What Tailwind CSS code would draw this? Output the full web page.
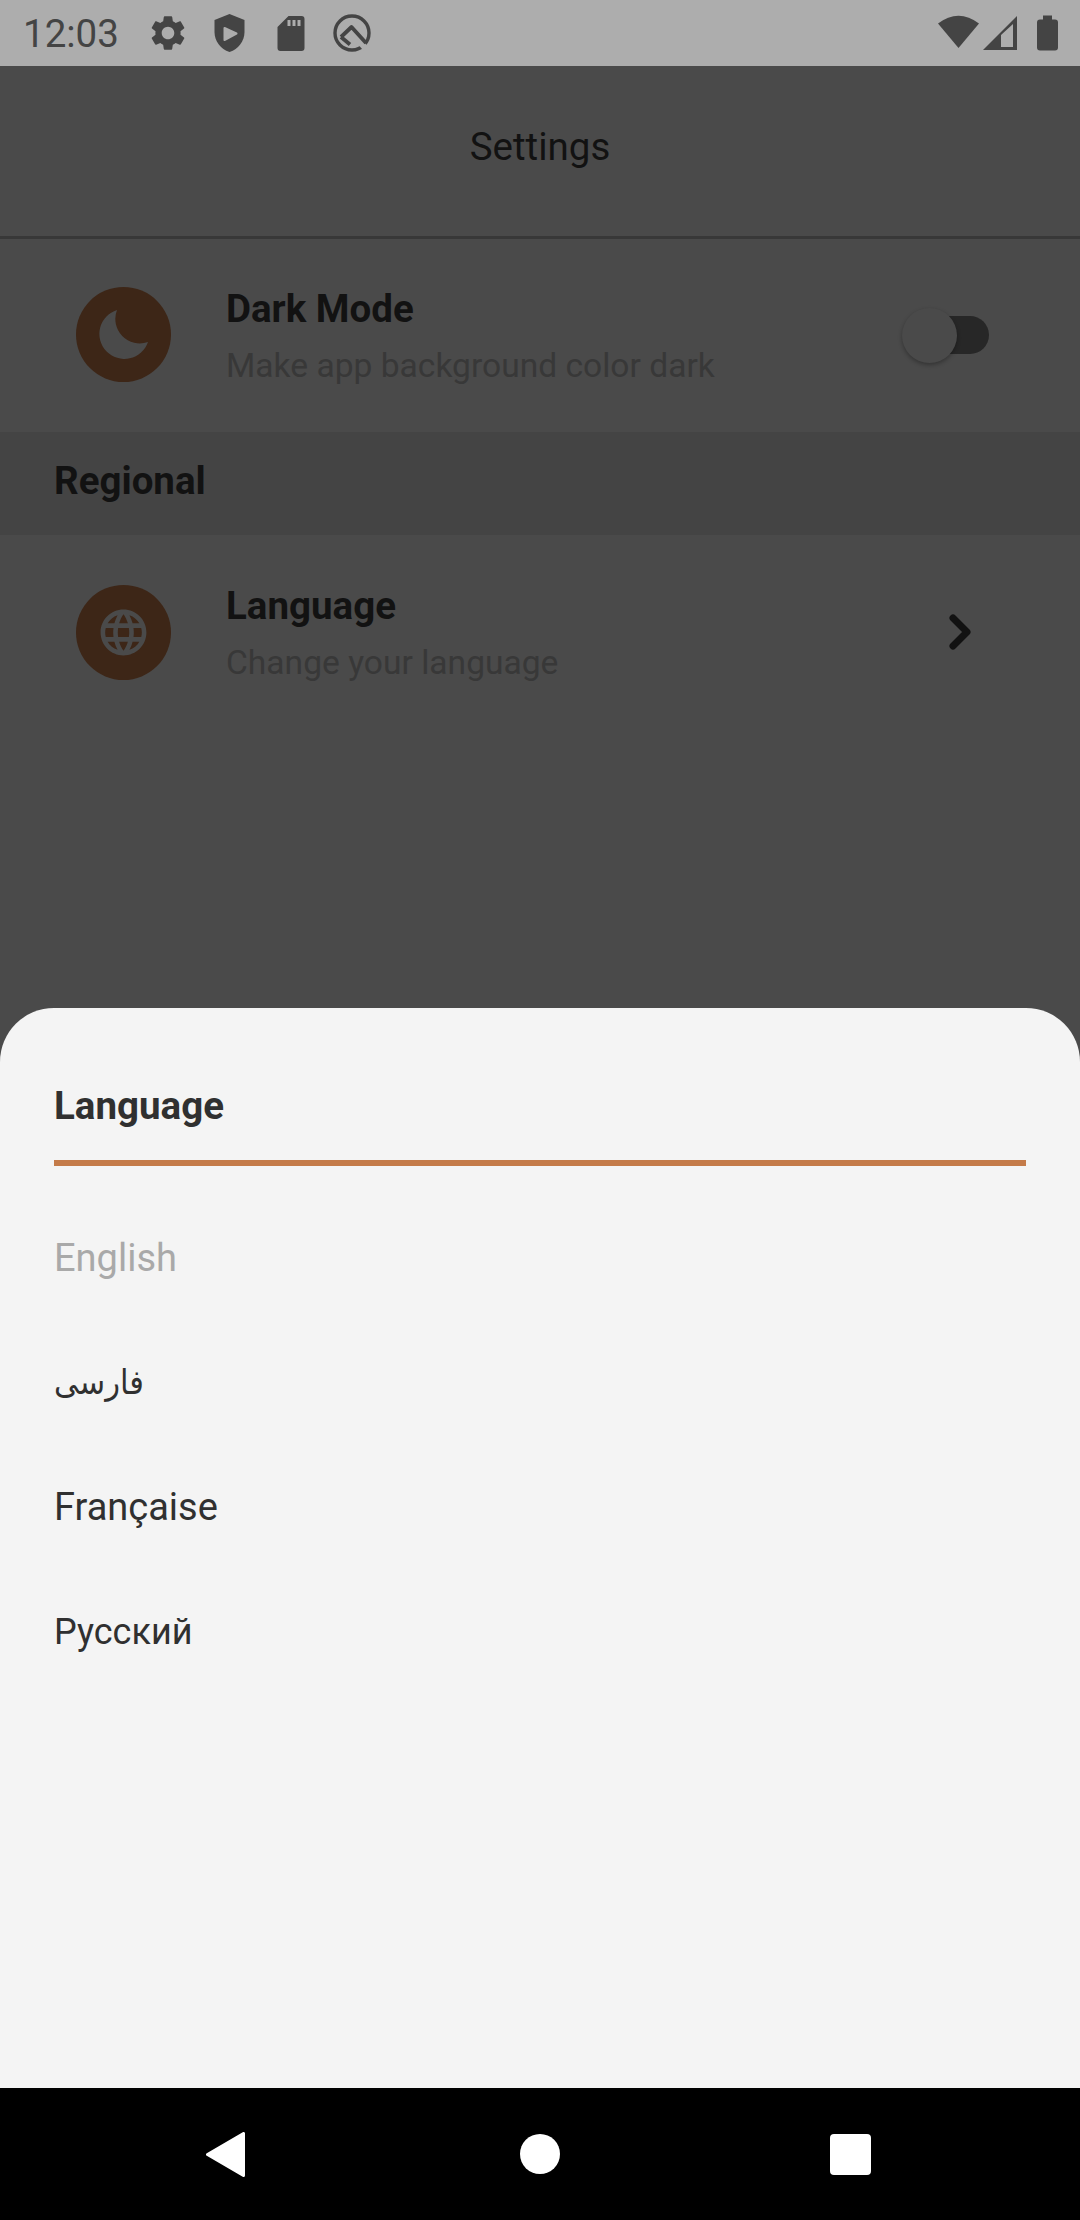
<!doctype html>
<html>
<head>
<meta charset="utf-8">
<script src="https://cdn.jsdelivr.net/npm/@tailwindcss/browser@4"></script>
</head>
<body class="m-0">
<div class="w-[1080px] h-[2220px] flex flex-col overflow-hidden bg-[#4a4a4a] [font-family:Roboto,'Noto_Sans','DejaVu_Sans',sans-serif]">
  <!-- status bar -->
  <div class="h-[66px] shrink-0 bg-[#adadad] flex items-center pl-[23px] pr-[22px] text-[#444444]">
    <span class="text-[38.5px] leading-[66px] w-[94px] mt-[2px]">12:03</span>
    <div class="flex items-center ml-[30px]">
      <svg class="w-[42px] h-[42px]" viewBox="0 0 24 24" fill="#444444"><path d="M19.14 12.94c.04-.3.06-.61.06-.94 0-.32-.02-.64-.07-.94l2.03-1.58c.18-.14.23-.41.12-.61l-1.92-3.32c-.12-.22-.37-.29-.59-.22l-2.39.96c-.5-.38-1.03-.7-1.62-.94l-.36-2.54c-.04-.24-.24-.41-.48-.41h-3.84c-.24 0-.43.17-.47.41l-.36 2.54c-.59.24-1.13.57-1.62.94l-2.39-.96c-.22-.08-.47 0-.59.22L2.74 8.87c-.12.21-.08.47.12.61l2.03 1.58c-.05.3-.09.63-.09.94s.02.64.07.94l-2.03 1.58c-.18.14-.23.41-.12.61l1.92 3.32c.12.22.37.29.59.22l2.39-.96c.5.38 1.03.7 1.62.94l.36 2.54c.05.24.24.41.48.41h3.84c.24 0 .44-.17.47-.41l.36-2.54c.59-.24 1.13-.56 1.62-.94l2.39.96c.22.08.47 0 .59-.22l1.92-3.32c.12-.22.07-.47-.12-.61l-2.01-1.58zM12 15.6c-1.98 0-3.6-1.62-3.6-3.6s1.62-3.6 3.6-3.6 3.6 1.62 3.6 3.6-1.62 3.6-3.6 3.6z"/></svg>
      <svg class="w-[31px] h-[38px] ml-[25px]" viewBox="0 0 30 38"><path fill="#444444" d="M15 0 L30 6 V18 C30 27 24 35 15 38 C6 35 0 27 0 18 V6 Z"/><path fill="#adadad" stroke="#adadad" stroke-width="2" stroke-linejoin="round" d="M10 14 L22 19.5 L10 26 Z"/></svg>
      <svg class="w-[28px] h-[35px] ml-[32px]" viewBox="0 0 27 35"><path fill="#444444" fill-rule="evenodd" d="M11 0 H24 A3 3 0 0 1 27 3 V32 A3 3 0 0 1 24 35 H3 A3 3 0 0 1 0 32 V11 Z M10 4 V10 H13 V4 Z M15 4 V10 H18 V4 Z M20 4 V10 H23 V4 Z"/></svg>
      <svg class="w-[38px] h-[38px] ml-[28px]" viewBox="0 0 38 38" fill="none" stroke="#444444" stroke-linejoin="round"><circle cx="19" cy="19" r="17" stroke-width="3.4"/><path d="M26 27 L34 36" stroke="#adadad" stroke-width="6"/><path d="M8 23 L18.5 13 L33 29" stroke-width="3.8"/><path d="M8 23 L17 30.5" stroke-width="3.8"/></svg>
    </div>
    <div class="ml-auto flex items-center">
      <svg class="w-[41px] h-[36px] mt-[-2px]" viewBox="0 0 41 36"><path fill="#444444" d="M20.5 34 L0 9.5 Q20.5 -6 41 9.5 Z"/></svg>
      <svg class="w-[34px] h-[34px] ml-[4px]" viewBox="0 0 34 34"><path fill="#444444" fill-rule="evenodd" d="M0 34 L34 0 V34 Z M18 19 V31 H30 V8 Z"/></svg>
      <svg class="w-[21px] h-[36px] ml-[20px]" viewBox="0 0 21 35"><path fill="#444444" d="M6 0 H15 V4 H18 A3 3 0 0 1 21 7 V32 A3 3 0 0 1 18 35 H3 A3 3 0 0 1 0 32 V7 A3 3 0 0 1 3 4 H6 Z"/></svg>
    </div>
  </div>

  <!-- app bar -->
  <div class="h-[173px] shrink-0 border-b-[3px] border-[#383838] flex items-center justify-center pb-[9px]">
    <span class="text-[38.5px] text-[#121212]">Settings</span>
  </div>

  <!-- dark mode row -->
  <div class="h-[193px] shrink-0 flex items-center pl-[76px]">
    <div class="w-[95px] h-[95px] mb-[3px] rounded-full bg-[#3d2617] flex items-center justify-center">
      <svg class="w-[49px] h-[49px]" viewBox="0 0 49 49"><path fill="#4a4a4a" d="M18 0 A25 25 0 1 0 49 32 A24.5 24.5 0 0 1 18 0 Z"/></svg>
    </div>
    <div class="ml-[55px] flex flex-col mt-[1px]">
      <span class="text-[38.5px] leading-[44px] font-bold text-[#121212]">Dark Mode</span>
      <span class="text-[33.6px] leading-[40px] mt-[15px] text-[#383838]">Make app background color dark</span>
    </div>
    <div class="relative ml-auto mr-[91px] w-[74px] h-[38px] mb-[1px] rounded-full bg-[#272727]">
      <div class="absolute left-[-13px] top-[-8px] w-[55px] h-[55px] rounded-full bg-[#4a4a4a] shadow-[0_2px_4px_rgba(0,0,0,0.3)]"></div>
    </div>
  </div>

  <!-- section header -->
  <div class="h-[103px] shrink-0 bg-[#444444] flex items-center pl-[54px] pb-[5px]">
    <span class="text-[38.5px] font-bold text-[#121212]">Regional</span>
  </div>

  <!-- language row -->
  <div class="h-[194px] shrink-0 flex items-center pl-[76px]">
    <div class="w-[95px] h-[95px] rounded-full bg-[#3d2617] flex items-center justify-center">
      <svg class="w-[55px] h-[55px]" viewBox="0 0 24 24" fill="#4a4a4a"><path d="M11.99 2C6.47 2 2 6.48 2 12s4.47 10 9.99 10C17.52 22 22 17.52 22 12S17.52 2 11.99 2zm6.93 6h-2.95c-.32-1.25-.78-2.45-1.38-3.56 1.84.63 3.37 1.91 4.33 3.56zM12 4.04c.83 1.2 1.48 2.53 1.91 3.96h-3.82c.43-1.43 1.08-2.76 1.91-3.96zM4.26 14C4.1 13.36 4 12.69 4 12s.1-1.36.26-2h3.38c-.08.66-.14 1.32-.14 2 0 .68.06 1.34.14 2H4.26zm.82 2h2.95c.32 1.25.78 2.45 1.38 3.56-1.84-.63-3.37-1.9-4.33-3.56zm2.95-8H5.08c.96-1.66 2.49-2.93 4.33-3.56C8.81 5.55 8.35 6.75 8.03 8zM12 19.96c-.83-1.2-1.48-2.53-1.91-3.96h3.82c-.43 1.43-1.08 2.76-1.91 3.96zM14.34 14H9.66c-.09-.66-.16-1.32-.16-2 0-.68.07-1.35.16-2h4.68c.09.65.16 1.32.16 2 0 .68-.07 1.34-.16 2zm.25 5.56c.6-1.11 1.06-2.31 1.38-3.56h2.95c-.96 1.65-2.49 2.93-4.33 3.56zM16.36 14c.08-.66.14-1.32.14-2 0-.68-.06-1.34-.14-2h3.38c.16.64.26 1.31.26 2s-.1 1.36-.26 2h-3.38z"/></svg>
    </div>
    <div class="ml-[55px] flex flex-col mt-[2px]">
      <span class="text-[38.5px] leading-[44px] font-bold text-[#121212]">Language</span>
      <span class="text-[33.6px] leading-[40px] mt-[15px] text-[#383838]">Change your language</span>
    </div>
    <svg class="ml-auto mr-[108px] w-[24px] h-[36px]" viewBox="0 0 24 36" fill="none" stroke="#121212" stroke-width="7" stroke-linecap="round" stroke-linejoin="round"><path d="M5 4 L19 18 L5 32"/></svg>
  </div>

  <div class="flex-1"></div>

  <!-- bottom sheet -->
  <div class="h-[1080px] shrink-0 bg-[#f4f4f4] rounded-t-[54px] px-[54px] flex flex-col text-[#303030]">
    <div class="h-[158px] shrink-0 border-b-[6px] border-[#c47b49] flex items-center pt-[43px]">
      <span class="text-[38.5px] font-bold">Language</span>
    </div>
    <div class="flex flex-col pt-[30px]">
      <div class="h-[124px] flex items-center text-[38px] text-[#a9a9a9]">English</div>
      <div class="h-[125px] flex items-center text-[34px] font-stretch-condensed" dir="ltr">فارسی</div>
      <div class="h-[124px] flex items-center text-[38px]">Française</div>
      <div class="h-[125px] flex items-center text-[36px]">Русский</div>
    </div>
  </div>

  <!-- nav bar -->
  <div class="h-[132px] shrink-0 bg-black relative flex items-center justify-between">
    <svg class="absolute left-[206px] top-[44px] w-[39px] h-[45px]" viewBox="0 0 39 45"><path fill="#ffffff" stroke="#ffffff" stroke-width="3" stroke-linejoin="round" d="M37.5 1.5 V43.5 L1.5 22.5 Z"/></svg>
    <div class="absolute left-[520px] top-[46px] w-[40px] h-[40px] rounded-full bg-white"></div>
    <div class="absolute left-[830px] top-[46px] w-[41px] h-[41px] rounded-[4px] bg-white"></div>
  </div>
</div>
</body>
</html>
